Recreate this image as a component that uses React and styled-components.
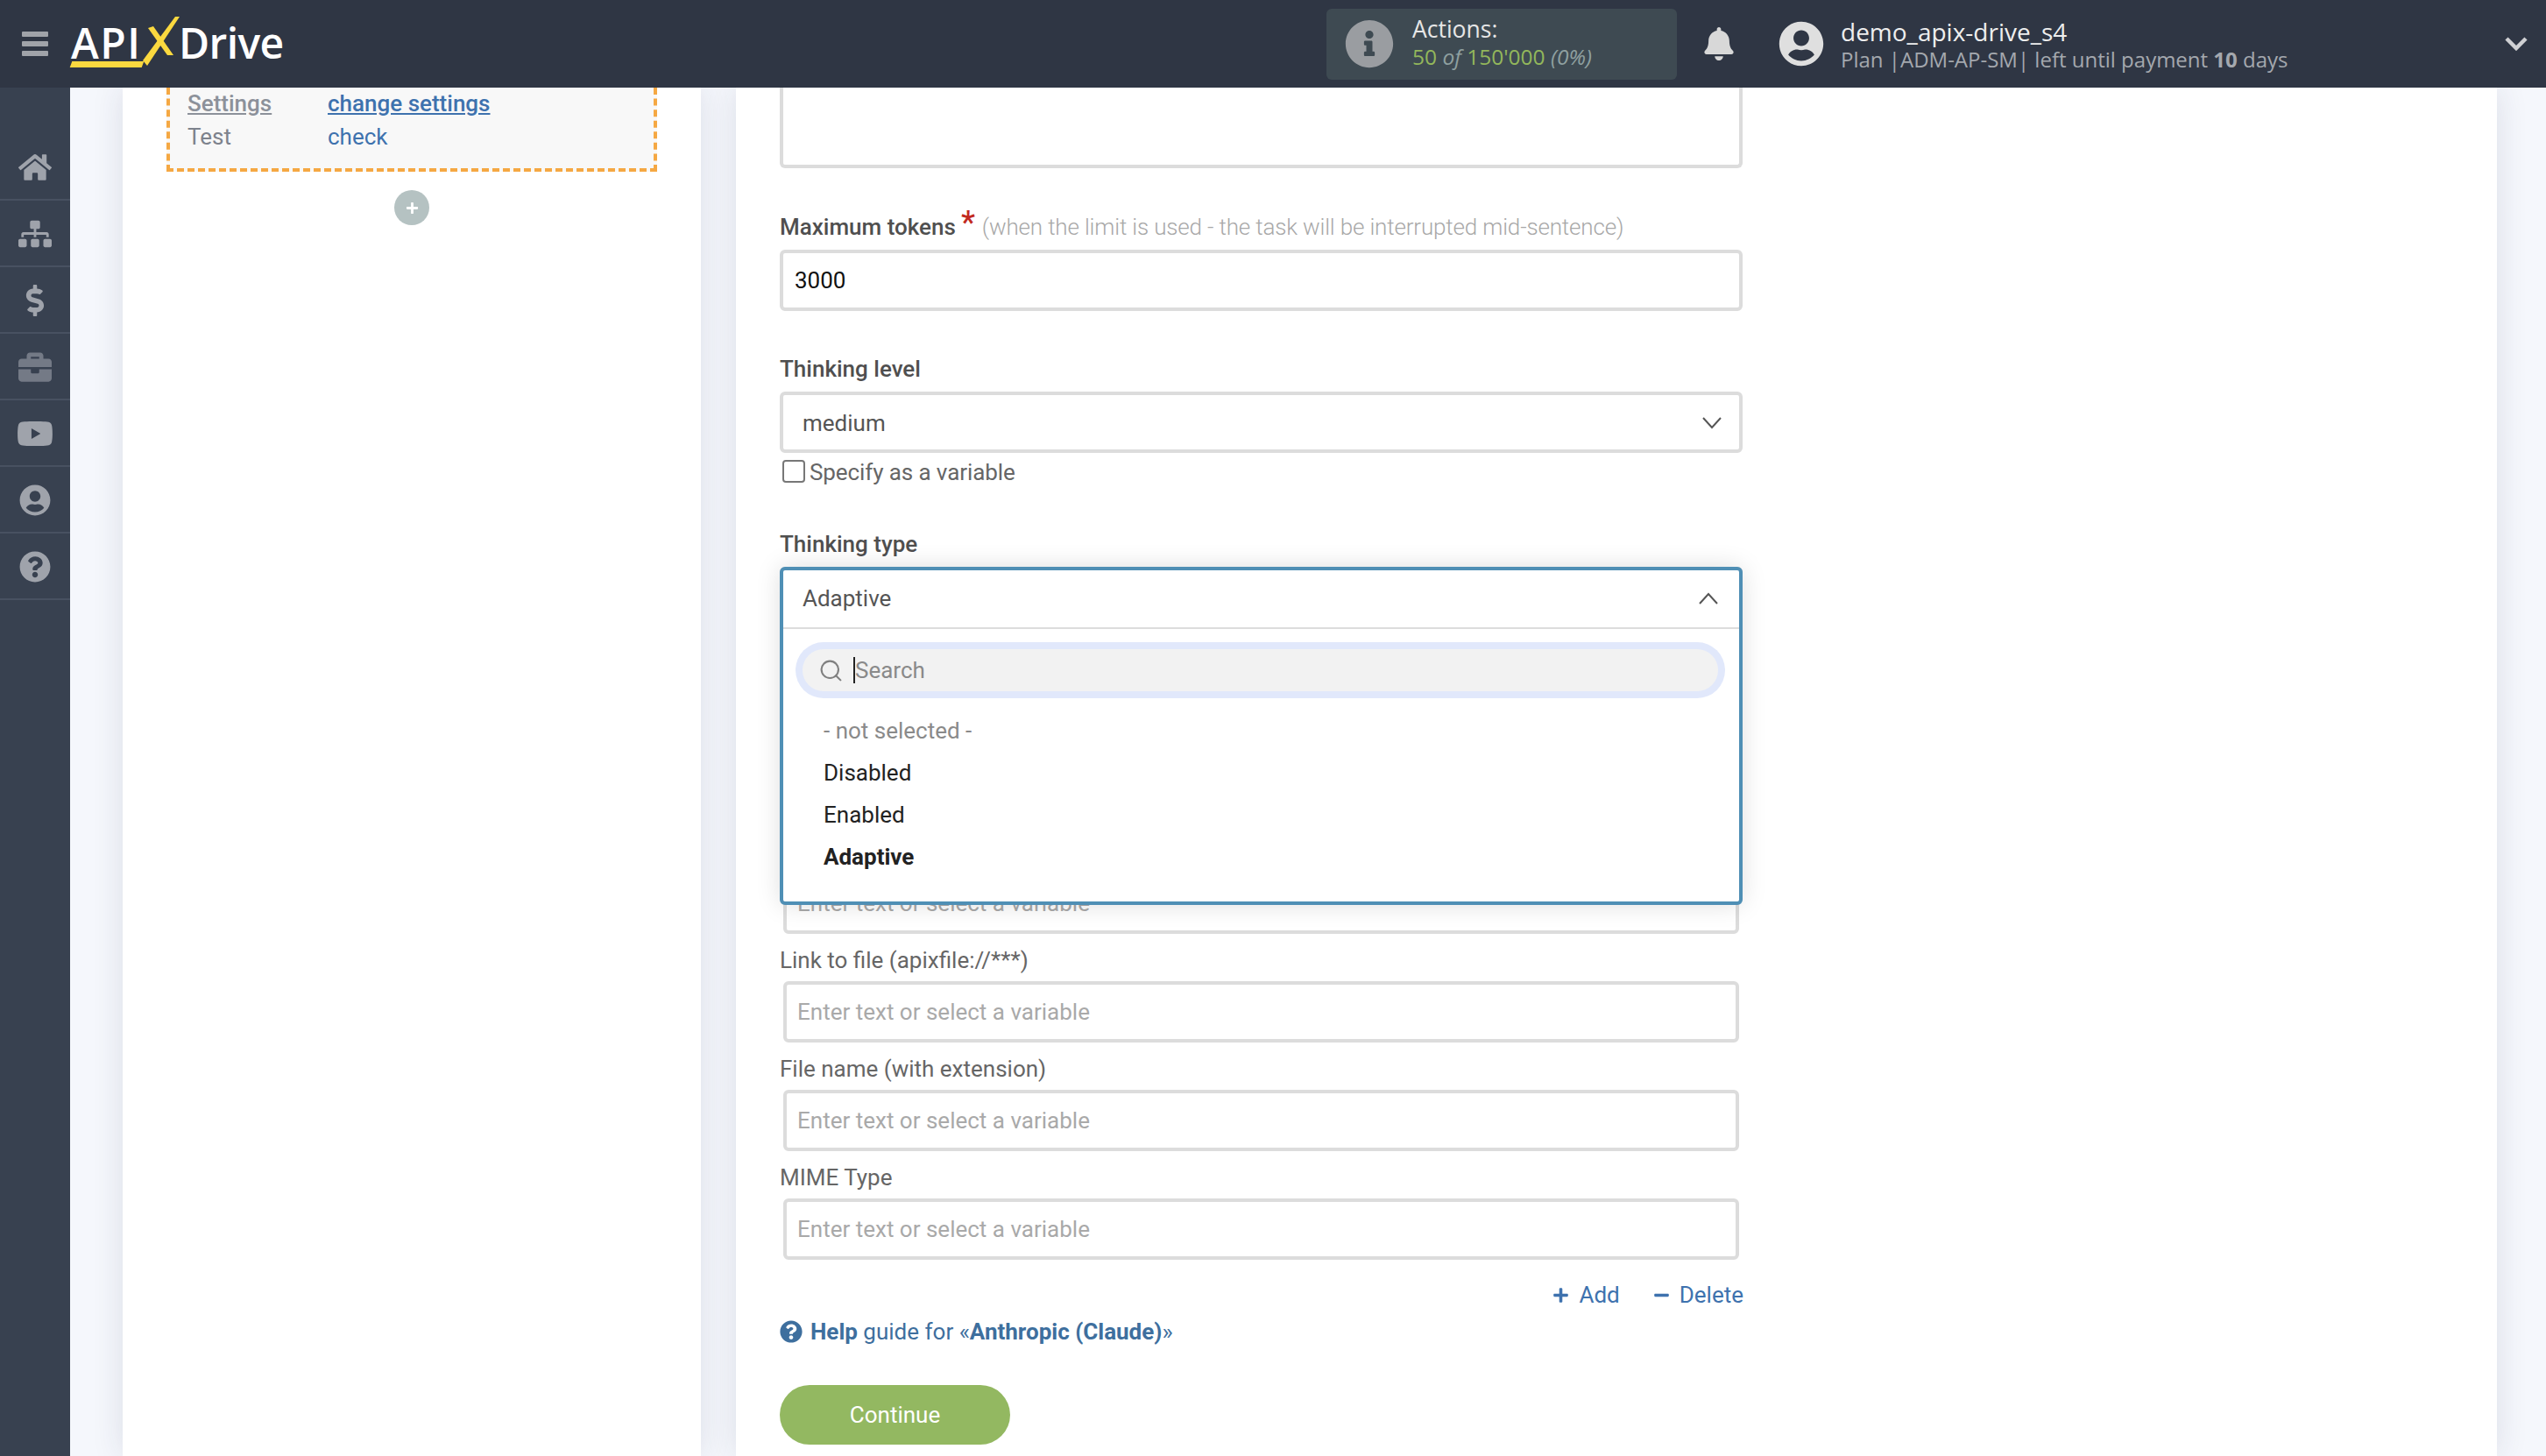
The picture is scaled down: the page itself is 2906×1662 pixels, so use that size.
import React from "react";
import styled, { createGlobalStyle } from "styled-components";
import { FaHome, FaSitemap, FaDollarSign, FaBriefcase, FaYoutube, FaUserCircle, FaQuestionCircle, FaInfoCircle, FaBell, FaPlus, FaMinus } from "react-icons/fa";
import { Search } from "lucide-react";

const GlobalStyle = createGlobalStyle`
  html, body { margin: 0; padding: 0; height: 100%; overflow: hidden; }
  body { font-family: "Roboto", "Liberation Sans", sans-serif; font-size: 26px; background: #f5f7fc; }
  #root { height: 100%; }
  * { box-sizing: border-box; }
`;

const Page = styled.div`
  display: flex;
  flex-direction: column;
  height: 100vh;
  overflow: hidden;
`;

const Header = styled.header`
  flex: 0 0 100px;
  display: flex;
  align-items: center;
  background: #2f3644;
  position: relative;
  z-index: 5;
`;

const Burger = styled.div`
  width: 30px;
  margin-left: 25px;
  display: flex;
  flex-direction: column;
  gap: 5px;
  span { display: block; height: 6px; border-radius: 1px; background: #a0a3a9; }
`;

const Logo = styled.div`
  display: flex;
  align-items: center;
  margin-left: 26px;
  font-family: "Open Sans", sans-serif;
  font-weight: 600;
  font-size: 48px;
  color: #fff;
  height: 100px;
`;

const LogoApi = styled.span`
  position: relative;
  width: 82px;
  letter-spacing: 1.5px;
  margin-top: -4px;
  &::after {
    content: "";
    position: absolute;
    left: 0;
    right: 0;
    bottom: 4px;
    height: 7px;
    background: #fbd93f;
    transform: skewX(-20deg);
  }
`;

const LogoX = styled.svg`
  width: 42px;
  height: 56px;
  margin-top: -6px;
`;

const LogoDrive = styled.span`
  margin-left: -1px;
  margin-top: -4px;
  letter-spacing: -0.6px;
`;

const ActionsBox = styled.div`
  margin-left: auto;
  width: 400px;
  height: 81px;
  display: flex;
  align-items: center;
  padding-left: 21px;
  gap: 21px;
  border-radius: 6px;
  background: #3e4a52;
  font-family: "Open Sans", sans-serif;
  font-size: 26.5px;
  color: #e6e6e6;
  svg { color: #9a9da1; font-size: 56px; flex: none; }
`;

const ActionsText = styled.div`
  display: flex;
  flex-direction: column;
  gap: 2px;
  line-height: 30px;
  margin-top: -2px;
  white-space: nowrap;
`;

const ActionsCount = styled.div`
  font-size: 24.5px;
  color: #8fa0a0;
  font-style: italic;
  b { font-weight: 400; font-style: normal; color: #93b75b; }
`;

const Bell = styled(FaBell)`
  margin-left: 29px;
  color: #d8d8d8;
  font-size: 38px;
  flex: none;
`;

const UserIcon = styled(FaUserCircle)`
  margin-left: 49px;
  color: #dfdfdf;
  font-size: 52px;
  flex: none;
`;

const UserText = styled.div`
  margin: 3px 0 0 19px;
  width: 758px;
  font-family: "Open Sans", sans-serif;
  line-height: 31px;
  white-space: nowrap;
`;

const UserName = styled.div`
  font-size: 28px;
  color: #eee;
`;

const UserPlan = styled.div`
  font-size: 24px;
  color: #a4a8ae;
  b { font-weight: 700; }
`;

const HeaderChevron = styled.svg`
  width: 26px;
  height: 16px;
  margin-right: 21px;
  flex: none;
`;

const Body = styled.div`
  flex: 1;
  display: flex;
  min-height: 0;
`;

const Sidebar = styled.nav`
  flex: 0 0 80px;
  background: #384150;
  padding-top: 53px;
`;

const SideItem = styled.div`
  height: 76px;
  padding-top: 2px;
  display: flex;
  align-items: center;
  justify-content: center;
  border-bottom: 2px solid #485161;
  color: ${(p) => (p.$dim ? "#747a86" : "#9fa3ab")};
  font-size: ${(p) => p.$size || 38}px;
`;

const Workspace = styled.main`
  flex: 1;
  display: flex;
  gap: 40px;
  padding: 0 56px 0 60px;
  min-width: 0;
`;

const LeftPanel = styled.section`
  flex: 0 0 660px;
  display: flex;
  flex-direction: column;
  align-items: center;
  background: #fff;
  box-shadow: 0 0 34px rgba(30, 40, 70, 0.12);
`;

const StepCard = styled.div`
  width: 560px;
  padding: 0 20px 17px;
  background: #f8f8f8;
  border: 4px dashed #f5a843;
  border-top: none;
`;

const StepRow = styled.div`
  display: grid;
  grid-template-columns: 160px 1fr;
  height: 37.5px;
  line-height: 37px;
  font-size: 26px;
  color: #7d828c;
`;

const StepLink = styled.a`
  color: #3e72ae;
  font-weight: ${(p) => (p.$strong ? 500 : 400)};
  text-decoration: ${(p) => (p.$strong ? "underline" : "none")};
`;

const StepMuted = styled.span`
  font-weight: 500;
  color: #8c919a;
  text-decoration: underline;
`;

const AddStep = styled.div`
  width: 40px;
  height: 40px;
  margin-top: 21px;
  border-radius: 50%;
  background: #b5c2c2;
  color: #fff;
  display: flex;
  align-items: center;
  justify-content: center;
  font-size: 15px;
`;

const RightPanel = styled.section`
  flex: 1;
  padding-left: 50px;
  background: #fff;
  box-shadow: 0 0 34px rgba(30, 40, 70, 0.12);
`;

const FormColumn = styled.div`
  width: 1099px;
  display: flex;
  flex-direction: column;
`;

const TextareaStub = styled.div`
  height: 92px;
  border: 4px solid #dcdcdc;
  border-top: none;
  border-radius: 0 0 6px 6px;
`;

const Label = styled.label`
  display: block;
  height: 36px;
  line-height: 36px;
  margin-top: ${(p) => p.$top}px;
  margin-bottom: ${(p) => p.$bottom}px;
  font-size: 26px;
  font-weight: ${(p) => (p.$bold ? 500 : 400)};
  color: ${(p) => (p.$bold ? "#4f4f4f" : "#666")};
  white-space: nowrap;
`;

const Required = styled.span`
  margin: 0 8px 0 6px;
  font-size: 36px;
  line-height: 20px;
  vertical-align: 2px;
  color: #c22a1f;
`;

const LabelHint = styled.span`
  font-weight: 300;
  letter-spacing: -0.16px;
  color: #a8a8a8;
`;

const TextInput = styled.input`
  display: block;
  height: 70px;
  width: ${(p) => (p.$inset ? "1091px" : "100%")};
  margin: ${(p) => (p.$inset ? `${p.$top || 0}px 4px 0` : 0)};
  padding: 0 ${(p) => (p.$inset ? 12 : 13)}px;
  border: 4px solid #dcdcdc;
  border-radius: 6px;
  outline: none;
  background: #fff;
  font-family: "Roboto", sans-serif;
  font-size: 26px;
  color: #111;
  &::placeholder { color: #a9a9a9; opacity: 1; }
`;

const SelectBox = styled.div`
  position: relative;
  height: 70px;
  display: flex;
  align-items: center;
  justify-content: space-between;
  padding: 2px 19px 0 22px;
  border: 4px solid #dcdcdc;
  border-radius: 6px;
  font-size: 26px;
  color: #555;
`;

const Chevron = styled.svg`
  width: 24px;
  height: 14px;
  flex: none;
`;

const CheckRow = styled.div`
  display: flex;
  align-items: center;
  gap: 5px;
  height: 26px;
  margin-top: 8px;
  padding-left: 3px;
  font-size: 26px;
  letter-spacing: -0.1px;
  color: #666;
  span + span { margin-top: 2px; }
`;

const CheckBox = styled.span`
  width: 26px;
  height: 26px;
  border: 2px solid #777;
  border-radius: 4px;
  background: #fff;
`;

const Dropdown = styled.div`
  position: absolute;
  z-index: 2;
  top: -4px;
  left: -4px;
  right: -4px;
  height: 386px;
  background: #fff;
  border: 4px solid #4f8fb5;
  border-radius: 6px;
  box-shadow: 0 0 28px rgba(0, 0, 0, 0.13);
`;

const DropdownHead = styled.div`
  height: 67px;
  display: flex;
  align-items: center;
  justify-content: space-between;
  padding: 0 23px 2px 22px;
  border-bottom: 2px solid #dcdcdc;
  color: #555;
`;

const SearchRing = styled.div`
  height: 64px;
  margin: 15px 16px 0 14px;
  padding: 8px;
  border-radius: 32px;
  background: #e1e8fb;
`;

const SearchField = styled.div`
  height: 48px;
  display: flex;
  align-items: center;
  padding-left: 18px;
  border-radius: 24px;
  background: #f2f2f2;
  color: #8a8a8a;
  svg { color: #808080; flex: none; }
`;

const Caret = styled.span`
  width: 2px;
  height: 30px;
  margin-left: 11px;
  background: #222;
`;

const OptionList = styled.ul`
  list-style: none;
  margin: 13px 0 0;
  padding: 0 0 0 46px;
`;

const Option = styled.li`
  height: 48px;
  line-height: 48px;
  color: ${(p) => (p.$muted ? "#8a8a8a" : "#222")};
  font-weight: ${(p) => (p.$active ? 700 : 400)};
`;

const RowActions = styled.div`
  display: flex;
  justify-content: flex-end;
  gap: 38px;
  height: 36px;
  line-height: 36px;
  margin: 22px -1px 0 0;
  color: #3e72ae;
`;

const ActionLink = styled.a`
  display: flex;
  align-items: center;
  gap: 11px;
  svg { font-size: 19px; }
`;

const HelpLine = styled.div`
  display: flex;
  align-items: center;
  height: 36px;
  margin-top: 6px;
  color: #3e6f9e;
  white-space: pre;
  svg { font-size: 26px; margin-right: 9px; }
  b { font-weight: 700; }
`;

const ContinueButton = styled.button`
  width: 263px;
  height: 68px;
  margin-top: 43px;
  border: none;
  border-radius: 34px;
  background: #93b861;
  color: #fff;
  font-family: "Roboto", sans-serif;
  font-size: 26px;
`;

const ChevronLine = ({ up }) => (
  <Chevron viewBox="0 0 24 14" fill="none" stroke="#555" strokeWidth="2">
    <polyline points={up ? "2,13 12,2 22,13" : "2,1 12,12 22,1"} />
  </Chevron>
);

const sideItems = [
  { Icon: FaHome },
  { Icon: FaSitemap },
  { Icon: FaDollarSign, size: 36 },
  { Icon: FaBriefcase, dim: true },
  { Icon: FaYoutube, size: 42 },
  { Icon: FaUserCircle, size: 36 },
  { Icon: FaQuestionCircle, size: 36 },
];

const PLACEHOLDER = "Enter text or select a variable";

export default function App() {
  return (
    <Page>
      <GlobalStyle />
      <Header>
        <Burger><span /><span /><span /></Burger>
        <Logo>
          <LogoApi>API</LogoApi>
          <LogoX viewBox="0 0 42 56">
            <polygon points="37,0 42,0 5,56 0,50" fill="#fbd93f" />
            <polygon points="6,13 12,11 35,44 28,44" fill="#fbd93f" />
          </LogoX>
          <LogoDrive>Drive</LogoDrive>
        </Logo>
        <ActionsBox>
          <FaInfoCircle />
          <ActionsText>
            <span>Actions:</span>
            <ActionsCount><b>50</b> of <b>150'000</b> (0%)</ActionsCount>
          </ActionsText>
        </ActionsBox>
        <Bell />
        <UserIcon />
        <UserText>
          <UserName>demo_apix-drive_s4</UserName>
          <UserPlan>Plan |ADM-AP-SM| left until payment <b>10</b> days</UserPlan>
        </UserText>
        <HeaderChevron viewBox="0 0 26 16" fill="none" stroke="#cfd0d3" strokeWidth="4.5">
          <polyline points="2,2 13,13 24,2" />
        </HeaderChevron>
      </Header>
      <Body>
        <Sidebar>
          {sideItems.map(({ Icon, size, dim }, i) => (
            <SideItem key={i} $size={size} $dim={dim}><Icon /></SideItem>
          ))}
        </Sidebar>
        <Workspace>
          <LeftPanel>
            <StepCard>
              <StepRow><StepMuted>Settings</StepMuted><StepLink $strong>change settings</StepLink></StepRow>
              <StepRow><span>Test</span><StepLink>check</StepLink></StepRow>
            </StepCard>
            <AddStep><FaPlus /></AddStep>
          </LeftPanel>
          <RightPanel>
            <FormColumn>
              <TextareaStub />

              <Label $bold $top={49} $bottom={8}>
                Maximum tokens<Required>*</Required><LabelHint>(when the limit is used - the task will be interrupted mid-sentence)</LabelHint>
              </Label>
              <TextInput defaultValue="3000" readOnly />

              <Label $bold $top={48} $bottom={8}>Thinking level</Label>
              <SelectBox>medium<ChevronLine /></SelectBox>
              <CheckRow><CheckBox /><span>Specify as a variable</span></CheckRow>

              <Label $bold $top={52} $bottom={8}>Thinking type</Label>
              <SelectBox>
                Adaptive
                <Dropdown>
                  <DropdownHead>Adaptive<ChevronLine up /></DropdownHead>
                  <SearchRing>
                    <SearchField>
                      <Search size={29} strokeWidth={1.75} />
                      <Caret />
                      Search
                    </SearchField>
                  </SearchRing>
                  <OptionList>
                    <Option $muted>- not selected -</Option>
                    <Option>Disabled</Option>
                    <Option>Enabled</Option>
                    <Option $active>Adaptive</Option>
                  </OptionList>
                </Dropdown>
              </SelectBox>

              <TextInput $inset $top={279} placeholder={PLACEHOLDER} readOnly />

              <Label $top={12} $bottom={6}>Link to file (apixfile://***)</Label>
              <TextInput $inset placeholder={PLACEHOLDER} readOnly />

              <Label $top={12} $bottom={6}>File name (with extension)</Label>
              <TextInput $inset placeholder={PLACEHOLDER} readOnly />

              <Label $top={12} $bottom={6}>MIME Type</Label>
              <TextInput $inset placeholder={PLACEHOLDER} readOnly />

              <RowActions>
                <ActionLink><FaPlus />Add</ActionLink>
                <ActionLink><FaMinus />Delete</ActionLink>
              </RowActions>

              <HelpLine>
                <FaQuestionCircle /><b>Help</b> guide for «<b>Anthropic (Claude)</b>»
              </HelpLine>

              <ContinueButton>Continue</ContinueButton>
            </FormColumn>
          </RightPanel>
        </Workspace>
      </Body>
    </Page>
  );
}
